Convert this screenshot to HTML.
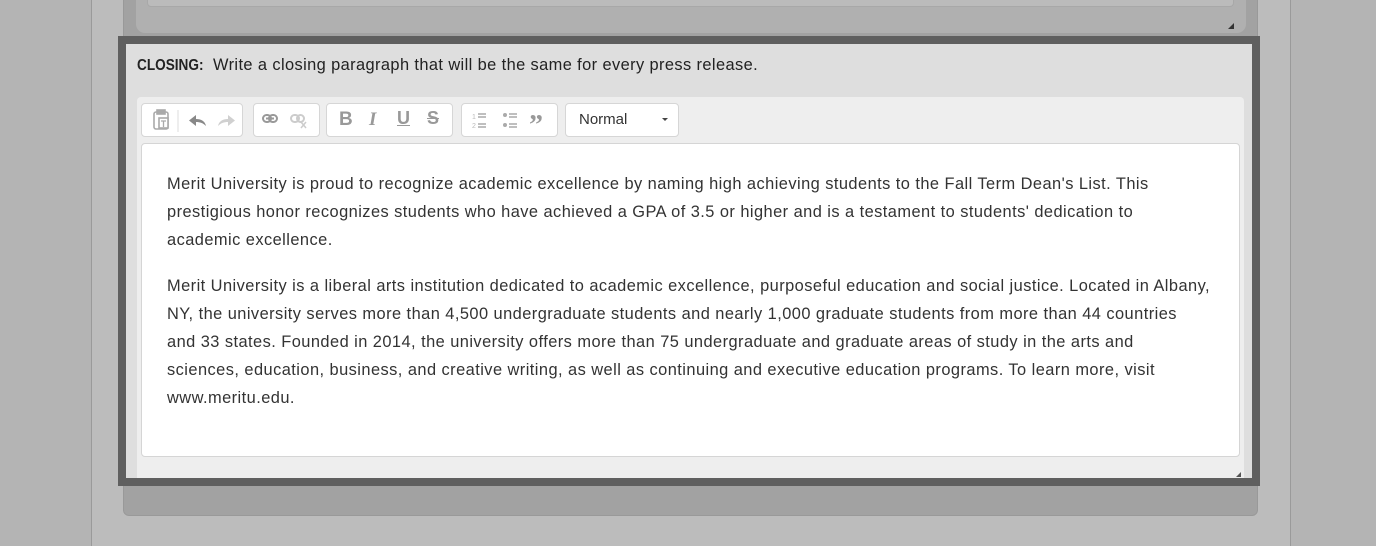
<!DOCTYPE html>
<html><head><style>
*{box-sizing:border-box;margin:0;padding:0}
body{width:1376px;height:546px;background:#b4b4b4;position:relative;overflow:hidden;font-family:"Liberation Sans",Arial,sans-serif}
.abs{position:absolute}
.btn{position:absolute;top:103px;height:34px;background:#fff;border:1px solid #d6d6d6;border-radius:4px}
.ic{position:absolute;top:0}
p{font-size:16.4px;line-height:28px;color:#333;margin:0 0 18px 0;white-space:nowrap;letter-spacing:0.45px}
</style></head><body>
<div class="abs" style="left:91px;top:0;width:1200px;height:546px;background:#bcbcbc;border-left:1px solid #9a9a9a;border-right:1px solid #9a9a9a"></div>
<div class="abs" style="left:123px;top:-10px;width:1135px;height:526px;background:#a2a2a2;border-radius:0 0 6px 6px;border:1px solid #999"></div>
<div class="abs" style="left:136px;top:-10px;width:1110px;height:43px;background:#b0b0b0;border-radius:0 0 9px 9px"></div>
<div class="abs" style="left:147px;top:-10px;width:1087px;height:17px;background:#bbb;border:1px solid #a8a8a8;border-radius:0 0 4px 4px"></div>
<div class="abs" style="left:1228px;top:23px;width:0;height:0;border-left:6px solid transparent;border-bottom:6px solid #333"></div>
<div class="abs" style="left:118px;top:36px;width:1142px;height:450px;border:8px solid #5f5f5f;background:#dedede"></div>
<div class="abs" style="left:137px;top:56px;font-size:16.4px;color:#222;white-space:nowrap"><b style="display:inline-block;transform:scaleX(0.85);transform-origin:left;font-size:16px;width:64px">CLOSING:</b><span style="position:absolute;left:76px;letter-spacing:0.4px">Write a closing paragraph that will be the same for every press release.</span></div>
<div class="abs" style="left:137px;top:97px;width:1107px;height:381px;background:#eeeeee;border-radius:4px 4px 0 0"></div>
<div class="btn" style="left:141px;width:102px">
<svg class="ic" width="102" height="32" viewBox="0 0 102 32" fill="none" stroke="#aaa" stroke-width="1.6">
<rect x="12" y="8" width="14" height="17" rx="2"/><rect x="15" y="6" width="8" height="4" fill="#aaa"/><rect x="17" y="14" width="9" height="10" fill="#fff"/><path d="M19 17h5M21.5 17v6" stroke-width="1.3"/>
<path d="M36 6v22" stroke="#ddd" stroke-width="1"/>
<path d="M64 22c-1-5-5-7-10-7v-4l-7 5.5 7 5.5v-4c4 0 7 1 10 4z" fill="#888" stroke="none"/>
<path d="M76 22c1-5 5-7 10-7v-4l7 5.5-7 5.5v-4c-4 0-7 1-10 4z" fill="#d0d0d0" stroke="none"/>
</svg></div>
<div class="btn" style="left:253px;width:67px">
<svg class="ic" width="67" height="32" fill="none" stroke-width="2">
<rect x="9" y="11" width="8" height="7" rx="3.5" stroke="#999"/><rect x="15" y="11" width="8" height="7" rx="3.5" stroke="#999"/><path d="M12 14.5h8" stroke="#999"/>
<rect x="37" y="11" width="8" height="7" rx="3.5" stroke="#ccc"/><rect x="43" y="11" width="7" height="7" rx="3.5" stroke="#ccc"/><path d="M47 18l5 6M52 18l-5 6" stroke="#ccc" stroke-width="1.5"/>
</svg></div>
<div class="btn" style="left:326px;width:127px;font-size:19px;font-weight:bold;color:#999">
<span class="abs" style="left:12px;top:5px">B</span>
<span class="abs" style="left:42px;top:5px;font-style:italic;font-family:'Liberation Serif',serif">I</span>
<span class="abs" style="left:70px;top:4px;text-decoration:underline;font-size:18px">U</span>
<span class="abs" style="left:100px;top:4px;text-decoration:line-through;font-size:18px">S</span>
</div>
<div class="btn" style="left:461px;width:97px">
<svg class="ic" width="97" height="32" fill="#bbb" stroke="#bbb">
<text x="10" y="15" font-size="7" stroke="none" font-family="Liberation Sans">1</text><text x="10" y="24" font-size="7" stroke="none" font-family="Liberation Sans">2</text>
<path d="M16 10h8M16 13h8M16 20h8M16 23h8" stroke-width="1.5" stroke="#aaa"/>
<circle cx="43" cy="11" r="2" stroke="none" fill="#aaa"/><circle cx="43" cy="21" r="2" stroke="none" fill="#aaa"/>
<path d="M47 10h8M47 13h8M47 20h8M47 23h8" stroke-width="1.5" stroke="#aaa"/>
<text x="67" y="30" font-size="28" font-weight="bold" stroke="none" fill="#999" font-family="Liberation Serif">”</text>
</svg></div>
<div class="btn" style="left:565px;width:114px;font-size:15px;color:#333">
<span class="abs" style="left:13px;top:7px">Normal</span>
<span class="abs" style="left:96px;top:14px;border-left:3px solid transparent;border-right:3px solid transparent;border-top:3px solid #444"></span>
</div>
<div class="abs" style="left:141px;top:143px;width:1099px;height:314px;background:#fff;border:1px solid #d5d5d5;border-radius:4px;padding:26px 25px 0 25px">
<p>Merit University is proud to recognize academic excellence by naming high achieving students to the Fall Term Dean's List. This<br>prestigious honor recognizes students who have achieved a GPA of 3.5 or higher and is a testament to students' dedication to<br>academic excellence.</p>
<p>Merit University is a liberal arts institution dedicated to academic excellence, purposeful education and social justice. Located in Albany,<br>NY, the university serves more than 4,500 undergraduate students and nearly 1,000 graduate students from more than 44 countries<br>and 33 states. Founded in 2014, the university offers more than 75 undergraduate and graduate areas of study in the arts and<br>sciences, education, business, and creative writing, as well as continuing and executive education programs. To learn more, visit<br>www.meritu.edu.</p>
</div>
<div class="abs" style="left:1236px;top:472px;width:0;height:0;border-left:5px solid transparent;border-bottom:5px solid #555"></div>
</body></html>
